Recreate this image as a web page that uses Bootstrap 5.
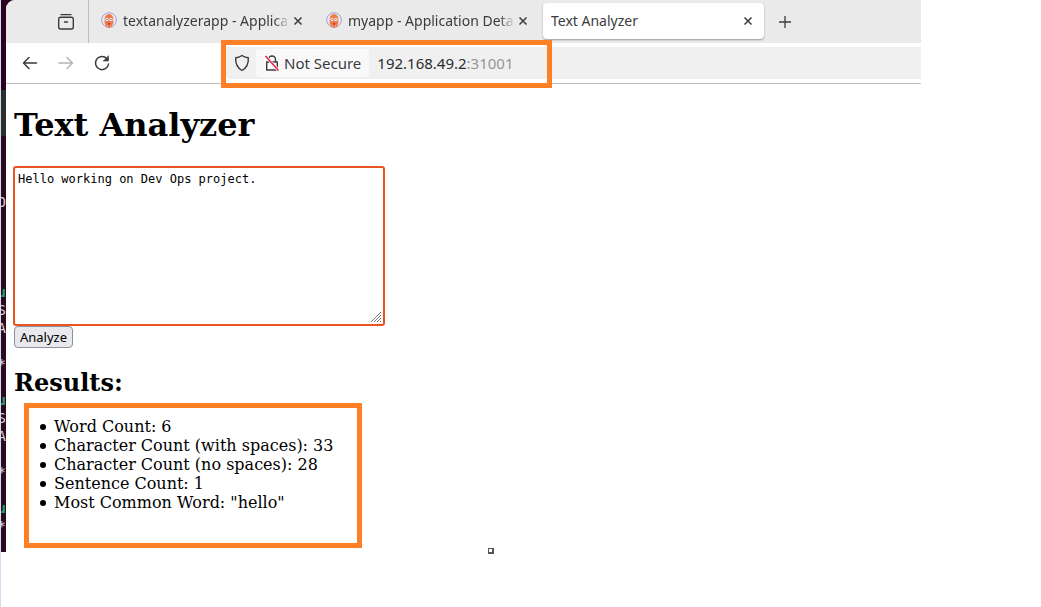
<!DOCTYPE html>
<html lang="en">
<head>
<meta charset="utf-8">
<meta name="viewport" content="width=device-width, initial-scale=1">
<title>Text Analyzer</title>
<link href="https://cdn.jsdelivr.net/npm/bootstrap@5.3.0/dist/css/bootstrap.min.css" rel="stylesheet">
<style>
  body { background: #fff; color: #000; border-left: 1px solid #d3deee; padding-right: 120px; font-family: "Noto Sans", "Open Sans", sans-serif; }
  button { color: inherit; }
  .desk { background: #2c001e; }
  .term { width: 5px; flex: none; background: linear-gradient(#2c001e 90px, #2a2f2e 90px, #2a2f2e 136px, #2c0a22 136px); contain: size; }
  .term pre { direction: rtl; padding-top: 193px; font: 14px/18px "DejaVu Sans Mono", monospace; color: #d8d0d4; overflow: hidden; }
  .term b { color: #26a269; }
  .browser { min-width: 0; border-top-left-radius: 9px; overflow: hidden; background: #fff; }
  .ui { color: #3b3b3f; font-size: 15px; line-height: 20px; }
  .tabstrip { background: #eaeaea; height: 43px; }
  .recent { width: 83px; padding-left: 51px; border-right: 1px solid #bdbdbd; }
  .tab { width: 225px; height: 36px; padding: 0 12px 0 8px; border-radius: 4px; font-size: 14px; }
  .tab.current { width: 221px; padding-right: 8px; background: #fff; box-shadow: 0 1px 2px rgba(0,0,0,.35); }
  .tabs { padding: 0 0 1px 4px; }
  .tab-title { overflow: hidden; white-space: nowrap; flex: 1; min-width: 0; }
  .tab-title.faded { -webkit-mask-image: linear-gradient(90deg, #000 calc(100% - 16px), transparent); mask-image: linear-gradient(90deg, #000 calc(100% - 16px), transparent); }
  .bare { border: 0; background: none; padding: 0; display: flex; align-items: center; justify-content: center; }
  .toolbar { height: 41px; border-bottom: 1px solid #bfbfbf; }
  .navs { width: 220px; padding-left: 15px; gap: 18px; }
  .address { background: #f0f0f0; height: 32px; border-radius: 4px 0 0 4px; min-width: 0; }
  .origin { width: 321px; padding-left: 8px; }
  .mark-box { border: 5px solid #ff7f27; pointer-events: none; }
  .mark-url { inset: -7px -5px -9px -5px; }
  .insecure { background: #f9f9f9; height: 28px; padding: 0 8px; margin-left: 6px; border-radius: 4px; }
  .host { color: #2b2b2f; min-width: 0; }
  .port { color: #959595; }
  .doc { padding: 23px 8px 40px; font-family: "DejaVu Serif", serif; line-height: 19px; }
  .doc h1 { font-size: 32px; line-height: 37px; font-weight: 700; margin-bottom: 22px; }
  .doc h2 { font-size: 24px; line-height: 28px; font-weight: 700; margin: 21px 0 20px; }
  .entry { width: 372px; margin-left: -1px; }
  .entry textarea { height: 160px; border: 2px solid #e95420; border-radius: 3px; padding: 4px 3px; font: 12px/14px "DejaVu Sans Mono", monospace; color: #000; resize: none; outline: 0; background: #fff; }
  .grip { right: 3px; bottom: 3px; }
  .analyze { border: 1px solid #8f8f9d; border-radius: 4px; background: #e9e9ed; width: 59px; height: 22px; padding: 0; font: 13px/18px "Noto Sans", sans-serif; color: #000; }
  .results { padding-left: 26px; list-style: none; }
  .results li { display: flex; align-items: center; gap: 8px; }
  .results li::before { content: ""; width: 6px; height: 6px; margin-top: 1px; border-radius: 50%; background: #000; }
  .mark-results { left: 10px; top: -14px; width: 338px; height: 145px; }
  .handle { left: 482px; bottom: -2px; width: 6px; height: 6px; border: 1px solid #555; border-width: 1px 2px 2px 1px; background: #fff; }
</style>
</head>
<body>
<div class="min-vh-100">
<div class="desk d-flex">
  <aside class="term overflow-hidden" aria-hidden="true"><pre class="m-0">O




<b>u</b>
S
A

*

<b>u</b>
S
A

*

<b>u</b>
*</pre></aside>
  <div class="position-relative flex-grow-1">
  <div class="browser">
    <header class="ui">
      <div class="tabstrip d-flex">
        <div class="recent d-flex align-items-center flex-shrink-0">
          <button class="bare" aria-label="Recent browsing"><svg width="18" height="18" fill="none" stroke="#3b3b3f" stroke-width="1.4" stroke-linecap="round"><path d="M4 1.600H14"/><path d="M1.700 6Q1.700 4.300 3.500 4.300H14.500Q16.300 4.300 16.300 6V14Q16.300 16 14.500 16H3.500Q1.700 16 1.700 14z"/><path d="M7.500 9H10.500"/></svg></button>
        </div>
        <nav class="tabs d-flex align-items-center flex-shrink-0">
          <div class="tab d-flex align-items-center">
            <svg class="flex-shrink-0 me-1" width="18" height="18" viewBox="0 0 18 18"><circle cx="8" cy="8" r="7.3" fill="#e9edf6" stroke="#a99ad0"/><path d="M3.6 7a4.4 5 0 0 1 8.8 0v4q0 1.6-1.2 2.2V15H9.8v-1.5H9.2V16H6.8v-2.5H6.2V15H4.8v-1.8Q3.6 12.6 3.6 11z" fill="#ef7b4d"/><circle cx="6" cy="7.5" r="1.6" fill="#fff"/><circle cx="10" cy="7.5" r="1.6" fill="#fff"/><circle cx="6" cy="7.5" r=".6" fill="#222"/><circle cx="10" cy="7.5" r=".6" fill="#222"/><path d="M6.9 11h2.2v1.700H6.900z" fill="#bd3f28"/></svg>
            <span class="tab-title faded">textanalyzerapp - Applica</span>
            <button class="bare" aria-label="Close tab"><svg width="16" height="16" stroke="#3b3b3f" stroke-width="1.5"><path d="M4.5 4.5l7 7M11.5 4.5l-7 7"/></svg></button>
          </div>
          <div class="tab d-flex align-items-center">
            <svg class="flex-shrink-0 me-1" width="18" height="18" viewBox="0 0 18 18"><circle cx="8" cy="8" r="7.3" fill="#e9edf6" stroke="#a99ad0"/><path d="M3.6 7a4.4 5 0 0 1 8.8 0v4q0 1.6-1.2 2.2V15H9.8v-1.5H9.2V16H6.8v-2.5H6.2V15H4.8v-1.8Q3.6 12.6 3.6 11z" fill="#ef7b4d"/><circle cx="6" cy="7.5" r="1.6" fill="#fff"/><circle cx="10" cy="7.5" r="1.6" fill="#fff"/><circle cx="6" cy="7.5" r=".6" fill="#222"/><circle cx="10" cy="7.5" r=".6" fill="#222"/><path d="M6.9 11h2.2v1.700H6.900z" fill="#bd3f28"/></svg>
            <span class="tab-title faded">myapp - Application Deta</span>
            <button class="bare" aria-label="Close tab"><svg width="16" height="16" stroke="#3b3b3f" stroke-width="1.5"><path d="M4.5 4.5l7 7M11.5 4.5l-7 7"/></svg></button>
          </div>
          <div class="tab current d-flex align-items-center">
            <span class="tab-title">Text Analyzer</span>
            <button class="bare" aria-label="Close tab"><svg width="16" height="16" stroke="#3b3b3f" stroke-width="1.5"><path d="M4.5 4.5l7 7M11.5 4.5l-7 7"/></svg></button>
          </div>
        </nav>
        <button class="bare ms-2 px-1" aria-label="New tab"><svg width="18" height="18" stroke="#3b3b3f" stroke-width="1.3"><path d="M9 3v12M3 9h12"/></svg></button>
      </div>
      <div class="toolbar d-flex align-items-center">
        <div class="navs d-flex flex-shrink-0">
          <button class="bare" aria-label="Back"><svg width="18" height="18" fill="none" stroke="#3b3b3f" stroke-width="1.5" stroke-linecap="round" stroke-linejoin="round"><path d="M15.500 9H2.5M8 3.5L2.5 9 8 14.500"/></svg></button>
          <button class="bare" aria-label="Forward"><svg width="18" height="18" fill="none" stroke="#b4b4b6" stroke-width="1.5" stroke-linecap="round" stroke-linejoin="round"><path d="M2 9h13.500M10 3.500L15.500 9 10 14.500"/></svg></button>
          <button class="bare" aria-label="Reload"><svg width="18" height="18" fill="none" stroke="#3b3b3f" stroke-width="1.5" stroke-linecap="round"><path d="M15.600 10a6.600 6.600 0 1 1-1.800-5.600"/><path d="M15.500 2v5h-5z" fill="#3b3b3f" stroke-width=".6"/></svg></button>
        </div>
        <div class="address flex-grow-1">
          <div class="origin position-relative h-100 d-flex align-items-center">
            <svg class="flex-shrink-0" width="16" height="18" fill="none" stroke="#3b3b3f" stroke-width="1.4" stroke-linejoin="round"><path d="M8 1.500Q11 3.500 14.300 3.800Q14.900 12.500 8 16.500Q1.100 12.500 1.700 3.800Q5 3.500 8 1.500z"/></svg>
            <button class="bare insecure flex-shrink-0"><svg class="me-1" width="16" height="18" fill="none" stroke-width="1.4"><path d="M4.500 8V5.500a3.500 3.500 0 0 1 7 0V8M2.700 8H13.300V16H2.700z" stroke="#3b3b3f" stroke-linejoin="round"/><path d="M1.500 2L14.500 16.500" stroke="#f9f9f9" stroke-width="3"/><path d="M1.500 2L14.500 16.500" stroke="#e22850" stroke-width="1.600"/></svg>Not Secure</button>
            <a class="text-decoration-none ms-2 host" href="#">192.168.49.2<span class="port">:31001</span></a>
            <div class="mark-box mark-url position-absolute"></div>
          </div>
        </div>
      </div>
    </header>
    <main class="doc">
      <h1><label for="text">Text Analyzer</label></h1>
      <div class="entry position-relative">
        <textarea id="text" class="d-block w-100" spellcheck="false">Hello working on Dev Ops project.</textarea>
        <svg class="grip position-absolute" width="12" height="12" stroke="#777" stroke-width="1"><path d="M1 11L11 1M4 11L11 4M7 11L11 7M10 11L11 10"/></svg>
      </div>
      <button class="analyze d-block">Analyze</button>
      <h2>Results:</h2>
      <section class="position-relative">
        <ul class="results m-0">
          <li>Word Count: 6</li>
          <li>Character Count (with spaces): 33</li>
          <li>Character Count (no spaces): 28</li>
          <li>Sentence Count: 1</li>
          <li>Most Common Word: "hello"</li>
        </ul>
        <div class="mark-box mark-results position-absolute"></div>
      </section>
    </main>
  </div>
  <span class="handle position-absolute"></span>
  </div>
</div>
</div>
<script src="https://cdn.jsdelivr.net/npm/bootstrap@5.3.0/dist/js/bootstrap.bundle.min.js"></script>
</body>
</html>
